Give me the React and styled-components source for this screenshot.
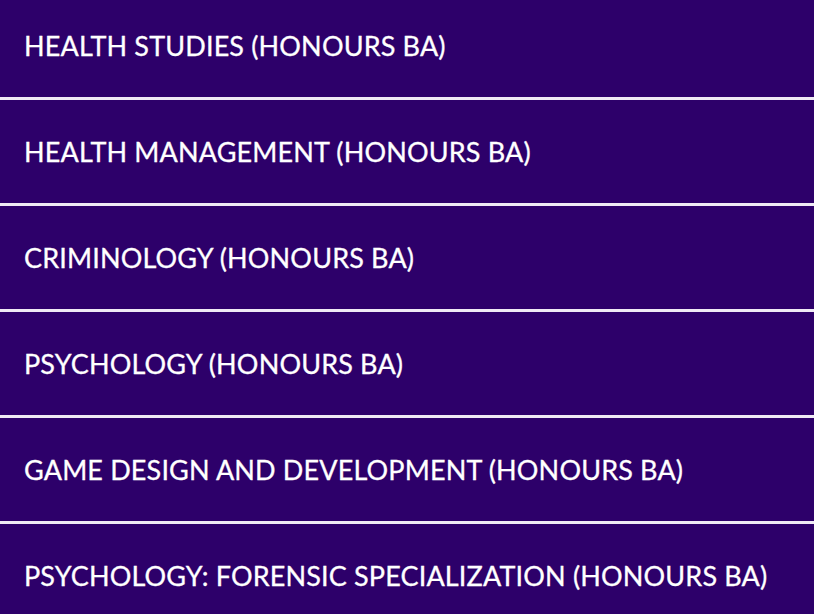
import React from 'react'
import styled, { createGlobalStyle } from 'styled-components';

const GlobalStyle = createGlobalStyle`
    html, body {
        margin: 0;
        padding: 0;
        background: #2d006a;
        overflow: hidden;
    }
`;

const programs = [
    'Health Studies (Honours BA)',
    'Health Management (Honours BA)',
    'Criminology (Honours BA)',
    'Psychology (Honours BA)',
    'Game Design and Development (Honours BA)',
    'Psychology: Forensic Specialization (Honours BA)',
];

function App() {
    return (
        <>
            <GlobalStyle />
            <ProgramList>
                {programs.map((name) => (
                    <ProgramRow key={name}>
                        <a href="#">{name}</a>
                    </ProgramRow>
                ))}
            </ProgramList>
        </>
    )
}

const ProgramList = styled.ul`
    list-style: none;
    margin: -6px 0 0 0;
    padding: 0;
    width: 814px;
    background: #2d006a;
`;

const ProgramRow = styled.li`
    height: 103px;
    display: flex;
    align-items: center;
    padding-left: 24px;
    border-bottom: 3px solid #efeaf5;
    a{
        color: #ffffff;
        text-decoration: none;
        text-transform: uppercase;
        font-family: Lato, "Open Sans", sans-serif;
        font-size: 27px;
        letter-spacing: 0.15px;
        -webkit-text-stroke: 0.3px #ffffff;
    }
`;

export default App;
